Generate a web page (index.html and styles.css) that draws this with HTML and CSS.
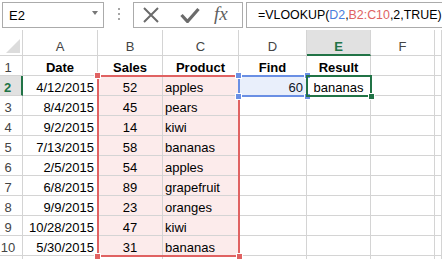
FILE: index.html
```html
<!DOCTYPE html>
<html lang="en">
<head>
  <meta charset="UTF-8">
  <title>VLOOKUP</title>
  <link rel="stylesheet" href="styles.css">
</head>
<body>
  <div class="fbar">
    <div class="namebox"><span>E2</span><span class="caret"></span></div>
    <div class="grip"><i></i><i></i><i></i></div>
    <div class="btns">
      <svg class="ico-x" width="16" height="16" viewBox="0 0 16 16"><path d="M1 1 L15 15 M15 1 L1 15" stroke="#6b6b6b" stroke-width="2" fill="none"/></svg>
      <svg class="ico-ok" width="20" height="16" viewBox="0 0 20 16"><path d="M1.5 8 L7.5 14.5 L18.5 2" stroke="#6b6b6b" stroke-width="3.2" fill="none"/></svg>
      <span class="fx">fx</span>
    </div>
    <div class="formula">=VLOOKUP(<span class="ref-d">D2</span>,<span class="ref-b">B2:C10</span>,2,TRUE)</div>
  </div>

  <div class="sheet">
    <div class="hd corner"><div class="tri"></div></div>
    <div class="hd">A</div>
    <div class="hd">B</div>
    <div class="hd">C</div>
    <div class="hd">D</div>
    <div class="hd hd-on">E</div>
    <div class="hd">F</div>
    <div class="hd"></div>

    <div class="rn">1</div>
    <div class="c th">Date</div><div class="c th">Sales</div><div class="c th">Product</div><div class="c th">Find</div><div class="c th">Result</div><div class="c"></div><div class="c"></div>

    <div class="rn rn-on">2</div>
    <div class="c r">4/12/2015</div><div class="c mid pk">52</div><div class="c pk">apples</div><div class="c r">60</div><div class="c mid">bananas</div><div class="c"></div><div class="c"></div>

    <div class="rn">3</div>
    <div class="c r">8/4/2015</div><div class="c mid pk">45</div><div class="c pk">pears</div><div class="c"></div><div class="c"></div><div class="c"></div><div class="c"></div>

    <div class="rn">4</div>
    <div class="c r">9/2/2015</div><div class="c mid pk">14</div><div class="c pk">kiwi</div><div class="c"></div><div class="c"></div><div class="c"></div><div class="c"></div>

    <div class="rn">5</div>
    <div class="c r">7/13/2015</div><div class="c mid pk">58</div><div class="c pk">bananas</div><div class="c"></div><div class="c"></div><div class="c"></div><div class="c"></div>

    <div class="rn">6</div>
    <div class="c r">2/5/2015</div><div class="c mid pk">54</div><div class="c pk">apples</div><div class="c"></div><div class="c"></div><div class="c"></div><div class="c"></div>

    <div class="rn">7</div>
    <div class="c r">6/8/2015</div><div class="c mid pk">89</div><div class="c pk">grapefruit</div><div class="c"></div><div class="c"></div><div class="c"></div><div class="c"></div>

    <div class="rn">8</div>
    <div class="c r">9/9/2015</div><div class="c mid pk">23</div><div class="c pk">oranges</div><div class="c"></div><div class="c"></div><div class="c"></div><div class="c"></div>

    <div class="rn">9</div>
    <div class="c r">10/28/2015</div><div class="c mid pk">47</div><div class="c pk">kiwi</div><div class="c"></div><div class="c"></div><div class="c"></div><div class="c"></div>

    <div class="rn">10</div>
    <div class="c r">5/30/2015</div><div class="c mid pk">31</div><div class="c pk">bananas</div><div class="c"></div><div class="c"></div><div class="c"></div><div class="c"></div>

    <div class="rn"></div>
    <div class="c"></div><div class="c"></div><div class="c"></div><div class="c"></div><div class="c"></div><div class="c"></div><div class="c"></div>

    <!-- range highlights drawn over the grid -->
    <div class="sel sel-red"><b class="h tl"></b><b class="h tr"></b><b class="h bl"></b><b class="h br"></b></div>
    <div class="sel sel-blue"><b class="h tl"></b><b class="h tr"></b><b class="h bl"></b><b class="h br"></b></div>
    <div class="sel sel-green"><b class="h br"></b></div>
  </div>
</body>
</html>
```

FILE: styles.css
```css
* {
  margin: 0;
  padding: 0;
  box-sizing: border-box;
}

body {
  width: 442px;
  height: 259px;
  overflow: hidden;
  background: #fff;
  font-family: "Liberation Sans", Arial, sans-serif;
  font-size: 13px;
  color: #000;
}

/* formula bar */
.fbar {
  display: flex;
  align-items: flex-start;
  height: 30px;
  padding-top: 2px;
  padding-left: 2px;
}

.namebox {
  width: 102px;
  height: 26px;
  border: 1px solid #ababab;
  display: flex;
  align-items: center;
  justify-content: space-between;
  padding: 0 5px 0 6px;
}

.caret {
  border-left: 3px solid transparent;
  border-right: 3px solid transparent;
  border-top: 4px solid #777;
  margin-top: -4px;
}

.grip {
  width: 29px;
  height: 26px;
  display: flex;
  flex-direction: column;
  align-items: center;
  justify-content: center;
  gap: 3px;
  padding-bottom: 2px;
}

.grip i {
  width: 2px;
  height: 2px;
  background: #a6a6a6;
}

.btns {
  width: 110px;
  height: 26px;
  border: 1px solid #ababab;
  display: flex;
  align-items: center;
  padding-left: 9px;
}

.ico-ok {
  margin-left: 21px;
}

.fx {
  margin-left: 14px;
  font-family: "Liberation Serif", serif;
  font-style: italic;
  font-size: 19px;
  color: #5f5f5f;
  margin-top: -2px;
}

.formula {
  flex: 1;
  height: 26px;
  margin-left: 3px;
  margin-right: -4px;
  border: 1px solid #ababab;
  padding-left: 11px;
  font-size: 12.4px;
  line-height: 24px;
  white-space: nowrap;
  overflow: hidden;
}

.ref-d {
  color: #4a7ddc;
}

.ref-b {
  color: #e06262;
}

/* sheet grid */
.sheet {
  position: relative;
  display: grid;
  grid-template-columns: 23px 75px 65px 76px 68px 64px 64px 1fr;
  grid-template-rows: 26px repeat(10, 20px) 3px;
}

.hd,
.rn,
.c {
  border-right: 1px solid #d4d4d4;
  border-bottom: 1px solid #d4d4d4;
  line-height: 15px;
  white-space: nowrap;
  overflow: hidden;
}

.hd {
  text-align: center;
  color: #444;
  padding-top: 9px;
}

.hd-on {
  background: #e1e1e1;
  color: #217346;
  font-weight: bold;
  border-bottom: 2px solid #217346;
}

.corner {
  display: flex;
  justify-content: flex-end;
  align-items: flex-end;
  padding: 0 2px 2px 0;
}

.tri {
  width: 14px;
  height: 14px;
  background: #dcdcdc;
  clip-path: polygon(100% 0, 100% 100%, 0 100%);
}

.rn {
  color: #444;
  text-align: center;
  padding: 4px 6px 0 0;
}

.rn-on {
  background: #e1e1e1;
  color: #217346;
  font-weight: bold;
  border-right: 2px solid #217346;
}

.c {
  padding: 4px 2px 0 2px;
}

.th {
  font-weight: bold;
  text-align: center;
}

.r {
  text-align: right;
  padding-right: 3px;
}

.mid {
  text-align: center;
}

.pk {
  background: #fcebeb;
}

/* selection outlines */
.sel {
  position: absolute;
  border: 2px solid;
  pointer-events: none;
}

.sel-red {
  left: 97px;
  top: 45px;
  width: 143px;
  height: 182px;
  border-color: #e06262;
  color: #e06262;
}

.sel-blue {
  left: 238px;
  top: 45px;
  width: 70px;
  height: 22px;
  border-color: #6a8fe4;
  color: #6a8fe4;
  background: rgba(100, 140, 230, 0.14);
}

.sel-green {
  left: 306px;
  top: 45px;
  width: 66px;
  height: 22px;
  border-color: #217346;
  color: #217346;
}

.h {
  position: absolute;
  width: 5px;
  height: 5px;
  background: currentColor;
  outline: 1px solid #fff;
}

.tl { left: -4px; top: -4px; }
.tr { right: -4px; top: -4px; }
.bl { left: -4px; bottom: -4px; }
.br { right: -4px; bottom: -4px; }
```
